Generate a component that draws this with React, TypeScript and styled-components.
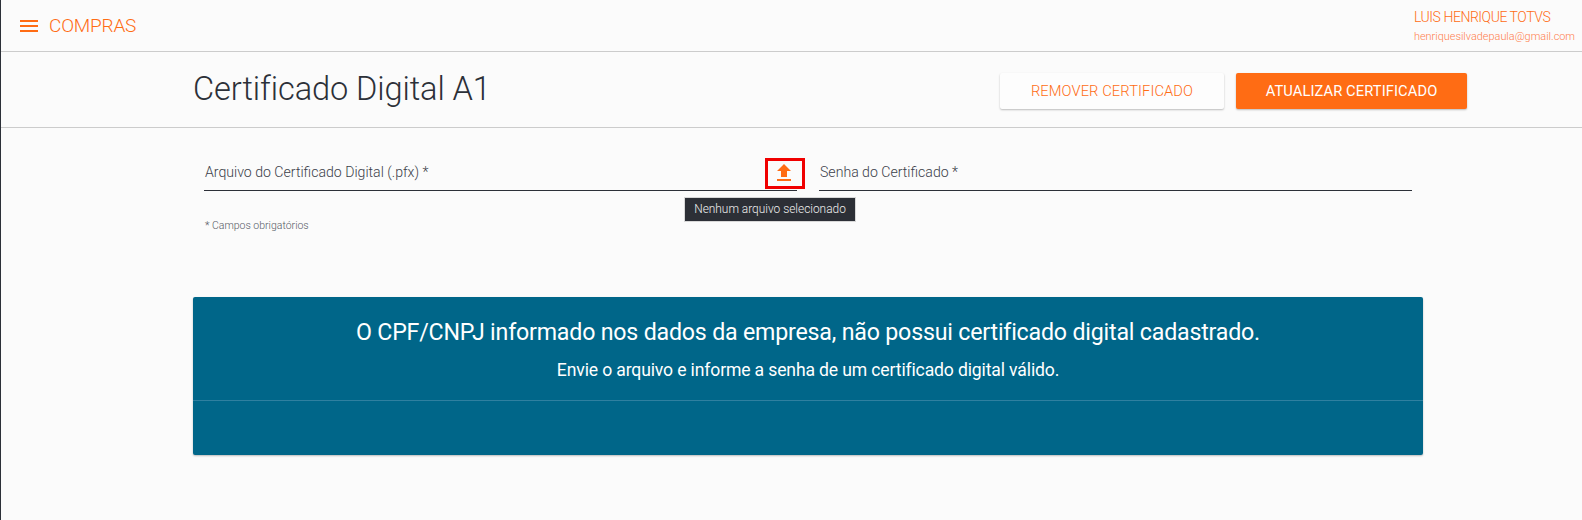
import React from 'react';
import styled, {createGlobalStyle} from 'styled-components';

const GlobalStyle = createGlobalStyle`
  html, body {
    margin: 0;
    padding: 0;
    height: 100%;
    background: #fbfbfb;
    font-family: Roboto, "Noto Sans", sans-serif;
    color: #2c3038;
  }
  * {
    box-sizing: border-box;
  }
`;

const orange = '#ff6c14';

const Page = styled.div`
  min-height: 520px;
  border-left: 1px solid #2c3038;
`;

const Header = styled.header`
  display: flex;
  align-items: center;
  justify-content: space-between;
  height: 52px;
  padding: 0 9px 0 19px;
  border-bottom: 1px solid #cccccc;
`;

const Brand = styled.div`
  display: flex;
  align-items: center;
  gap: 11px;
`;

const BrandName = styled.span`
  font-size: 19px;
  font-weight: 300;
  letter-spacing: -0.2px;
  color: ${orange};
`;

const UserBlock = styled.div`
  display: flex;
  flex-direction: column;
  gap: 5px;
  width: 159px;
`;

const UserName = styled.span`
  font-size: 14px;
  line-height: 16px;
  font-weight: 300;
  letter-spacing: -0.45px;
  white-space: nowrap;
  color: ${orange};
`;

const UserMail = styled.span`
  font-size: 10.9px;
  line-height: 13px;
  font-weight: 300;
  white-space: nowrap;
  color: #ff7d4d;
`;

const TitleBar = styled.div`
  display: flex;
  align-items: center;
  justify-content: space-between;
  height: 76px;
  padding: 2px 115px 0 192px;
  border-bottom: 1px solid #cccccc;
`;

const Title = styled.h1`
  margin: 0 0 4px;
  font-size: 32.6px;
  font-weight: 300;
  letter-spacing: -0.1px;
  color: #2c3038;
`;

const Actions = styled.div`
  display: flex;
  gap: 12px;
`;

const ActionButton = styled.button<{$primary?: boolean}>`
  height: 36px;
  width: ${p => (p.$primary ? '231px' : '224px')};
  border: 0;
  border-radius: 2px;
  font-family: inherit;
  font-size: 14.7px;
  font-weight: ${p => (p.$primary ? 400 : 300)};
  letter-spacing: 0.1px;
  color: ${p => (p.$primary ? '#ffffff' : orange)};
  background: ${p => (p.$primary ? orange : '#fdfdfd')};
  box-shadow: 0 1px 2px rgba(0, 0, 0, 0.25);
`;

const Content = styled.main`
  width: 1230px;
  margin-left: 192px;
`;

const FormGrid = styled.div`
  display: grid;
  grid-template-columns: 1fr 1fr;
  padding-top: 30px;
`;

const Field = styled.div`
  position: relative;
  display: flex;
  align-items: center;
  height: 33px;
  margin: 0 11px;
  padding: 0 1px 5px;
  border-bottom: 1px solid #2c3038;
`;

const FieldLabel = styled.label`
  font-size: 14.1px;
  font-weight: 300;
  color: #3b3f4a;
`;

const UploadIcon = styled.svg`
  position: absolute;
  right: 1px;
  top: 3px;
  width: 24px;
  height: 24px;
  fill: ${orange};
`;

const Highlight = styled.div`
  position: absolute;
  left: 561px;
  top: 0;
  width: 40px;
  height: 31px;
  border: 3px solid #f00000;
`;

const Tooltip = styled.div`
  position: absolute;
  left: 480px;
  top: 39px;
  width: 172px;
  height: 25px;
  background: #2c2f36;
  color: #f0f0f0;
  font-size: 11.9px;
  font-weight: 300;
  line-height: 25px;
  text-align: center;
  outline: 1px solid #d8d8d8;
  outline-offset: -1px;
`;

const RequiredNote = styled.p`
  margin: 28px 0 0 12px;
  height: 78px;
  font-size: 10.5px;
  line-height: 13px;
  font-weight: 300;
  color: #555a66;
`;

const Banner = styled.section`
  height: 158px;
  width: 1230px;
  border-radius: 2px;
  background: #006689;
  box-shadow: 0 1px 2px rgba(0, 0, 0, 0.25);
  color: #ffffff;
`;

const BannerBody = styled.div`
  height: 104px;
  padding-top: 20px;
  text-align: center;
  border-bottom: 1px solid #2f80a0;
`;

const BannerTitle = styled.h2`
  margin: 0;
  font-size: 23.2px;
  line-height: 30px;
  font-weight: 400;
  letter-spacing: -0.2px;
`;

const BannerText = styled.p`
  margin: 12px 0 0;
  font-size: 17.6px;
  line-height: 22px;
  font-weight: 400;
  letter-spacing: -0.15px;
`;

const App = () => {
  return (
    <Page>
      <GlobalStyle/>
      <Header>
        <Brand>
          <svg width="18" height="12" viewBox="0 0 18 12" fill={orange}>
            <rect x="0" y="0" width="18" height="2"/>
            <rect x="0" y="5" width="18" height="2"/>
            <rect x="0" y="10" width="18" height="2"/>
          </svg>
          <BrandName>COMPRAS</BrandName>
        </Brand>
        <UserBlock>
          <UserName>LUIS HENRIQUE TOTVS</UserName>
          <UserMail>henriquesilvadepaula@gmail.com</UserMail>
        </UserBlock>
      </Header>
      <TitleBar>
        <Title>Certificado Digital A1</Title>
        <Actions>
          <ActionButton>REMOVER CERTIFICADO</ActionButton>
          <ActionButton $primary>ATUALIZAR CERTIFICADO</ActionButton>
        </Actions>
      </TitleBar>
      <Content>
        <FormGrid>
          <Field>
            <FieldLabel>Arquivo do Certificado Digital (.pfx) *</FieldLabel>
            <UploadIcon viewBox="0 0 24 24">
              <path d="M9 16h6v-6h4l-7-7-7 7h4zm-4 2h14v2H5z"/>
            </UploadIcon>
            <Highlight/>
            <Tooltip>Nenhum arquivo selecionado</Tooltip>
          </Field>
          <Field>
            <FieldLabel>Senha do Certificado *</FieldLabel>
          </Field>
        </FormGrid>
        <RequiredNote>* Campos obrigatórios</RequiredNote>
        <Banner>
          <BannerBody>
            <BannerTitle>O CPF/CNPJ informado nos dados da empresa, não possui certificado digital cadastrado.</BannerTitle>
            <BannerText>Envie o arquivo e informe a senha de um certificado digital válido.</BannerText>
          </BannerBody>
        </Banner>
      </Content>
    </Page>
  );
};

export default App;
